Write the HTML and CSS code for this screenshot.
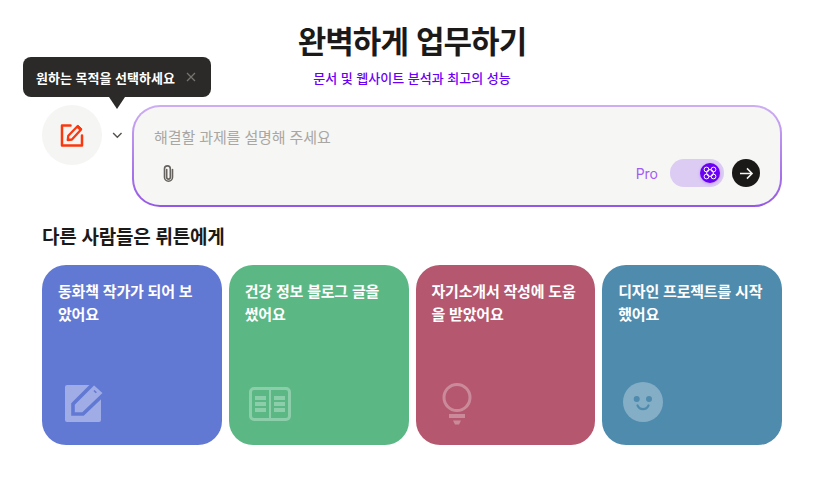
FILE: index.html
```
<!DOCTYPE html>
<html lang="ko">
<head>
<meta charset="utf-8">
<title>뤼튼</title>
<link rel="stylesheet" href="styles.css">
</head>
<body>
<main class="page">
  <h1 class="title">완벽하게 업무하기</h1>
  <p class="subtitle">문서 및 웹사이트 분석과 최고의 성능</p>
  <section class="composer">
    <div class="tooltip">
      <span class="tooltip-text">원하는 목적을 선택하세요</span>
      <svg class="tooltip-close" viewBox="0 0 10 10" width="10" height="10"><path d="M1 1l8 8M9 1l-8 8" stroke="#77746f" stroke-width="1.3" fill="none"/></svg>
    </div>
    <div class="tool-picker">
      <div class="tool-circle">
        <svg viewBox="0 0 24 24" width="24" height="24" fill="none" stroke="#fa3810" stroke-width="2.500" stroke-linejoin="round" stroke-linecap="round">
          <path d="M10.500 2.500H2v20h20v-10"/>
          <path d="M7.800 17l.5-4.300L17.500 3.200l3.600 3.200-9.200 10.100z" stroke-width="2.300"/>
          <path d="M17 4.500l3 2.700 1.500-1.600-3.300-3z" fill="#fa3810" stroke-width="1"/>
        </svg>
      </div>
      <svg class="chevron" viewBox="0 0 12 8" width="11" height="7"><path d="M1 1.200l4.800 4.800 4.800-4.800" stroke="#55524e" stroke-width="1.600" fill="none"/></svg>
    </div>
    <div class="input-frame">
      <div class="input-box">
        <div class="placeholder">해결할 과제를 설명해 주세요</div>
        <div class="input-actions">
          <svg class="clip" viewBox="0 0 13 17" width="13" height="17" fill="none" stroke="#66635f" stroke-width="1.600" stroke-linecap="round"><path d="M4.700 4.500v7.800a1.800 1.800 0 0 0 3.600 0V3.800a2.900 2.900 0 0 0-5.800 0v8.400a4 4 0 0 0 8 0V4.500"/></svg>
          <span class="pro">Pro</span>
          <div class="toggle">
            <span class="knob">
              <svg viewBox="0 0 14 14" width="14" height="14" fill="none" stroke="#fff" stroke-width="1"><circle cx="7" cy="7" r="3.400"/><rect x="1.200" y="1.200" width="4.600" height="4.600" rx="2"/><rect x="8.200" y="1.200" width="4.600" height="4.600" rx="2"/><rect x="1.200" y="8.200" width="4.600" height="4.600" rx="2"/><rect x="8.200" y="8.200" width="4.600" height="4.600" rx="2"/></svg>
            </span>
          </div>
          <span class="send">
            <svg viewBox="0 0 16 14" width="15" height="13" fill="none" stroke="#f6f6f4" stroke-width="1.600"><path d="M1 7h13M8.500 1.500L14 7l-5.500 5.500"/></svg>
          </span>
        </div>
      </div>
    </div>
  </section>
  <h2 class="section-title">다른 사람들은 뤼튼에게</h2>
  <section class="cards">
    <article class="card card-blue">
      <p class="card-text">동화책 작가가 되어 보<br>았어요</p>
      <svg class="card-icon solid" viewBox="0 0 38 37" width="38" height="37">
        <path fill="#9facE6" d="M2 0H26L36 10V35a2 2 0 0 1-2 2H2a2 2 0 0 1-2-2V2a2 2 0 0 1 2-2z"/>
        <path fill="#9facE6" stroke="#6279d4" stroke-width="3.600" stroke-linejoin="miter" d="M8 19L29 -2L40 8L18 29H8z"/>
        <path stroke="#6279d4" stroke-width="1.600" d="M29 5.500l2.300 2.300"/>
      </svg>
    </article>
    <article class="card card-green">
      <p class="card-text">건강 정보 블로그 글을 썼어요</p>
      <svg class="card-icon icon-book" viewBox="0 0 42 34" width="42" height="34">
        <rect x="1.500" y="1.500" width="39" height="31" rx="3.500" fill="none" stroke="#fff" stroke-width="3"/>
        <path d="M21 1v32" stroke="#fff" stroke-width="2"/>
        <path d="M6 11h11M6 17h11M6 23h11M25 11h11M25 17h11M25 23h11" stroke="#fff" stroke-width="4"/>
      </svg>
    </article>
    <article class="card card-red">
      <p class="card-text">자기소개서 작성에 도움을 받았어요</p>
      <svg class="card-icon bulb" viewBox="0 0 32 42" width="32" height="42">
        <circle cx="16" cy="14.500" r="13" fill="none" stroke="#fff" stroke-width="3"/>
        <path d="M8 31h16v4H8z" fill="#fff"/>
        <path d="M12 37.500h8l-2 4h-4z" fill="#fff"/>
      </svg>
    </article>
    <article class="card card-teal">
      <p class="card-text">디자인 프로젝트를 시작했어요</p>
      <svg class="card-icon solid" viewBox="0 0 40 40" width="40" height="40">
        <circle cx="20" cy="20" r="20" fill="#84aec6"/>
        <circle cx="13.700" cy="17" r="3" fill="#4f8bad"/>
        <circle cx="26" cy="17" r="3" fill="#4f8bad"/>
        <path d="M14.500 23.500a6 6 0 0 0 11 0" fill="none" stroke="#4f8bad" stroke-width="2.200" stroke-linecap="round"/>
      </svg>
    </article>
  </section>
</main>
</body>
</html>
```

FILE: styles.css
```
* { box-sizing: border-box; }
html, body { margin: 0; background: #fff; }
body { font-family: "Noto Sans CJK KR", "Noto Sans", sans-serif; color: #1c1a18; }
.page { width: 814px; height: 482px; padding: 17px 32px 0 42px; overflow: hidden; }
.title { margin: 0; height: 46px; line-height: 46px; font-size: 31px; font-weight: 700; text-align: center; letter-spacing: -0.9px; }
.subtitle { margin: 5px 0 0; height: 19px; line-height: 19px; font-size: 13px; font-weight: 500; color: #6a00f4; text-align: center; }
.composer { position: relative; display: flex; margin-top: 18px; }
.tooltip { position: absolute; left: -19px; top: -48px; width: 188px; height: 40px; padding: 0 15px 0 13px; display: flex; align-items: center; justify-content: space-between; background: #2b2a28; border-radius: 8px; }
.tooltip::after { content: ""; position: absolute; left: 86px; bottom: -12px; width: 0; height: 0; border-left: 8px solid transparent; border-right: 8px solid transparent; border-top: 12px solid #2b2a28; }
.tooltip-text { color: #fff; font-size: 13px; font-weight: 700; letter-spacing: 0; white-space: nowrap; }
.tool-picker { width: 90px; display: flex; align-items: flex-start; flex: none; }
.tool-circle { width: 60px; height: 60px; border-radius: 50%; background: #f5f5f3; display: flex; align-items: center; justify-content: center; }
.chevron { margin: 27px 0 0 10px; }
.input-frame { flex: 1; height: 102px; padding: 2px; border-radius: 28px; background: linear-gradient(180deg, #cdaef2 0%, #9556e6 100%); }
.input-box { height: 98px; border-radius: 26px; background: #f6f6f4; padding: 19px 20px 0; }
.placeholder { height: 22px; line-height: 22px; font-size: 15px; color: #a9a7a3; letter-spacing: -0.1px; }
.input-actions { display: flex; align-items: center; margin-top: 11px; height: 28px; }
.clip { margin: 0 0 0 8px; }
.pro { margin-left: auto; font-family: Inter, sans-serif; font-size: 14px; color: #a25cf5; }
.toggle { width: 54px; height: 28px; margin-left: 12px; padding: 4px; border-radius: 14px; background: #dccbf3; display: flex; justify-content: flex-end; }
.knob { width: 20px; height: 20px; border-radius: 50%; background: #6a00f4; display: flex; align-items: center; justify-content: center; box-shadow: 0 1px 3px rgba(106, 0, 244, 0.25); }
.send { width: 28px; height: 28px; margin-left: 8px; border-radius: 50%; background: #1a1917; display: flex; align-items: center; justify-content: center; }
.section-title { margin: 15px 0 0; height: 28px; line-height: 28px; font-size: 19px; font-weight: 700; letter-spacing: -0.25px; }
.cards { display: grid; grid-template-columns: repeat(4, 1fr); gap: 7px; margin-top: 15px; }
.card { position: relative; height: 180px; border-radius: 24px; padding: 14px 15px 14px 16px; color: #fff; }
.card-text { margin: 0; font-size: 15px; font-weight: 700; line-height: 23px; letter-spacing: -0.2px; word-break: break-all; }
.card-icon { position: absolute; left: 21px; bottom: 23px; opacity: 0.3; overflow: visible; }
.card-icon.solid { opacity: 1; }
.card-blue { background: #6279d4; }
.card-green { background: #5bb885; }
.card-red { background: #b5586f; }
.card-teal { background: #4f8bad; }
.card-blue .card-icon { left: 23px; }
.icon-book { left: 20px; bottom: 24px; }
.bulb { left: 25px; bottom: 20px; }
```
